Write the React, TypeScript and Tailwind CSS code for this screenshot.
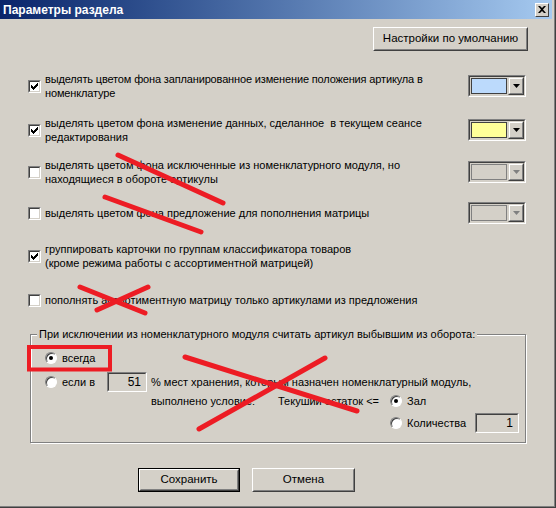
const ui = { fontFamily: '"Liberation Sans", Arial, sans-serif' };

function CheckBox({ on }: { on?: boolean }) {
  return (
    <span className="block w-[13px] h-[13px] shrink-0 border border-t-[#808080] border-l-[#808080] border-r-white border-b-white">
      <span className="flex w-full h-full items-center justify-center bg-white border border-t-[#404040] border-l-[#404040] border-r-[#D4D0C8] border-b-[#D4D0C8]">
        {on && (
          <svg width="7" height="7" viewBox="0 0 7 7">
            <path d="M0 2h1v1h1v1h1v-1h1v-1h1v-1h1v-1h1v3h-1v1h-1v1h-1v1h-1v1h-1v-1h-1v-1h-1z" fill="#000" />
          </svg>
        )}
      </span>
    </span>
  );
}

function Radio({ on }: { on?: boolean }) {
  return (
    <span className="flex w-[12px] h-[12px] shrink-0 items-center justify-center rounded-full bg-white border border-t-[#808080] border-l-[#808080] border-r-white border-b-white shadow-[inset_1px_1px_0_#404040]">
      {on && <span className="block w-[4px] h-[4px] rounded-full bg-black" />}
    </span>
  );
}

function ColorCombo({ color, disabled }: { color?: string; disabled?: boolean }) {
  return (
    <div className="flex w-[58px] h-[22px] shrink-0 border border-t-[#808080] border-l-[#808080] border-r-white border-b-white">
      <div className="flex flex-1 border border-t-[#404040] border-l-[#404040] border-r-[#D4D0C8] border-b-[#D4D0C8] bg-[#D4D0C8]">
        <div className="flex-1 p-[1px]">
          <div
            className={
              disabled
                ? 'w-full h-full border border-[#808080] bg-[#D4D0C8]'
                : 'w-full h-full border border-[#404040]'
            }
            style={color ? { backgroundColor: color } : undefined}
          />
        </div>
        <div className="w-[16px] border border-t-[#D4D0C8] border-l-[#D4D0C8] border-r-[#404040] border-b-[#404040]">
          <div className="flex w-full h-full items-center justify-center border border-t-white border-l-white border-r-[#808080] border-b-[#808080]">
            <svg width="7" height="4" viewBox="0 0 7 4">
              <path d="M0 0h7l-3.5 4z" fill={disabled ? '#808080' : '#000'} />
            </svg>
          </div>
        </div>
      </div>
    </div>
  );
}

function SunkenEdit({ value, w }: { value: string; w: string }) {
  return (
    <div className={`${w} h-[20px] shrink-0 border border-t-[#808080] border-l-[#808080] border-r-white border-b-white`}>
      <div className="flex w-full h-full items-center justify-end pr-[4px] border border-t-[#404040] border-l-[#404040] border-r-[#D4D0C8] border-b-[#D4D0C8] bg-[#D4D0C8] text-[12px]">
        {value}
      </div>
    </div>
  );
}

function Button({ children, w, isDefault }: { children: React.ReactNode; w: string; isDefault?: boolean }) {
  return (
    <button className={`${w} h-[24px] shrink-0 ${isDefault ? 'border border-black' : ''}`}>
      <span className="block w-full h-full border border-t-white border-l-white border-r-[#404040] border-b-[#404040]">
        <span className="flex w-full h-full items-center justify-center border border-t-[#D4D0C8] border-l-[#D4D0C8] border-r-[#808080] border-b-[#808080] text-[11.5px] text-black">
          {children}
        </span>
      </span>
    </button>
  );
}

function OptionRow({ on, color, disabled, mt, children }: { on?: boolean; color?: string; disabled?: boolean; mt: string; children: React.ReactNode }) {
  return (
    <div className={`flex items-center h-[22px] w-[498px] ${mt}`}>
      <CheckBox on={on} />
      <div className="flex-1 ml-[4px] leading-[14px] whitespace-pre">{children}</div>
      <ColorCombo color={color} disabled={disabled} />
    </div>
  );
}

export default function App() {
  return (
    <div className="relative w-[556px] h-[508px] border-r border-b border-[#404040] text-[11px] text-black" style={ui}>
      <div className="w-full h-full border-r border-b border-[#808080] bg-[#D4D0C8] pr-[2px]">
        {/* caption */}
        <div className="flex items-center justify-between h-[19px] pl-[3px] pr-[3px] bg-gradient-to-r from-[#0A246A] to-[#A6CAF0]">
          <span className="text-white font-bold text-[12px]">Параметры раздела</span>
          <span className="flex w-[14px] h-[14px] items-center justify-center bg-[#D4D0C8] border border-t-white border-l-white border-r-[#404040] border-b-[#404040]">
            <svg width="8" height="7" viewBox="0 0 8 7">
              <path d="M0 0h2l2 2 2-2h2v0l-3 3.5 3 3.5h-2l-2-2-2 2h-2l3-3.5z" fill="#000" />
            </svg>
          </span>
        </div>

        <div className="pl-[28px]">
          <div className="flex justify-end w-[500px] mt-[8px]">
            <Button w="w-[155px]">Настройки по умолчанию</Button>
          </div>

          <OptionRow on color="#BCDAFC" mt="mt-[24px]">
            <span className="tracking-[-0.15px]">{'выделять цветом фона запланированное изменение положения артикула в\nноменклатуре'}</span>
          </OptionRow>
          <OptionRow on color="#FFFF99" mt="mt-[22px]">
            {'выделять цветом фона изменение данных, сделанное  в текущем сеансе\nредактирования'}
          </OptionRow>
          <OptionRow disabled mt="mt-[20px]">
            {'выделять цветом фона исключенные из номенклатурного модуля, но\nнаходящиеся в обороте артикулы'}
          </OptionRow>
          <OptionRow disabled mt="mt-[19px]">
            {'выделять цветом фона предложение для пополнения матрицы'}
          </OptionRow>
          <div className="flex items-center h-[22px] w-[498px] mt-[21px]">
            <CheckBox on />
            <div className="ml-[4px] leading-[14px] whitespace-pre">
              {'группировать карточки по группам классификатора товаров\n(кроме режима работы с ассортиментной матрицей)'}
            </div>
          </div>
          <div className="flex items-center h-[22px] w-[498px] mt-[22px]">
            <CheckBox />
            <div className="ml-[4px] leading-[14px]">пополнять ассортиментную матрицу только артикулами из предложения</div>
          </div>

          {/* write-off rule group */}
          <fieldset className="ml-[2px] mt-[16px] w-[496px] border border-[#808080] shadow-[1px_1px_0_#fff,inset_1px_1px_0_#fff] pb-[9px]">
            <legend className="ml-[6px] px-[2px] leading-[14px] bg-[#D4D0C8]">
              При исключении из номенклатурного модуля считать артикул выбывшим из оборота:
            </legend>
            <div className="flex items-center h-[14px] mt-[10px] ml-[14px]">
              <Radio on />
              <span className="ml-[5px]">всегда</span>
            </div>
            <div className="flex items-center h-[20px] mt-[7px] ml-[14px]">
              <Radio />
              <span className="ml-[5px] w-[45px]">если в</span>
              <SunkenEdit value="51" w="w-[40px]" />
              <span className="ml-[4px]">% мест хранения, которым назначен номенклатурный модуль,</span>
            </div>
            <div className="flex items-center h-[14px] mt-[2px] ml-[120px]">
              <span className="w-[127px]">выполнено условие:</span>
              <span className="w-[112px]">Текуший остаток &lt;=</span>
              <Radio on />
              <span className="ml-[5px]">Зал</span>
            </div>
            <div className="flex items-center h-[20px] mt-[5px] ml-[359px]">
              <Radio />
              <span className="ml-[5px] w-[68px]">Количества</span>
              <SunkenEdit value="1" w="w-[44px]" />
            </div>
          </fieldset>

          <div className="flex gap-[12px] ml-[110px] mt-[25px]">
            <Button w="w-[102px]" isDefault>Сохранить</Button>
            <Button w="w-[103px]">Отмена</Button>
          </div>
        </div>
      </div>

      {/* hand-drawn red marks on top of the dialog */}
      <svg className="absolute inset-0 pointer-events-none" width="556" height="508">
        <g stroke="#ED1C24" strokeWidth="5" strokeLinecap="round" fill="none">
          <line x1="118" y1="155" x2="223" y2="203" />
          <line x1="105" y1="197" x2="201" y2="232" />
          <line x1="80" y1="287" x2="145" y2="313" />
          <line x1="148" y1="287" x2="97" y2="310" />
          <line x1="185" y1="357" x2="357" y2="411" />
          <line x1="325" y1="358" x2="199" y2="429" />
        </g>
        <rect x="29" y="347" width="81" height="22.5" stroke="#ED1C24" strokeWidth="4" fill="none" />
      </svg>
    </div>
  );
}
